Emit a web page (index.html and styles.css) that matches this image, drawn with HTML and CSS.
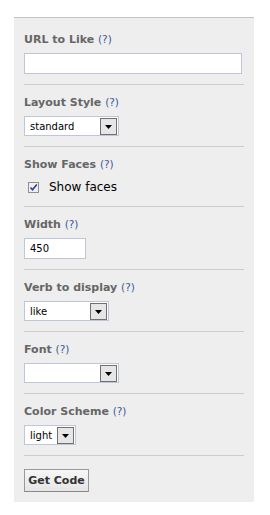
FILE: index.html
```html
<!DOCTYPE html>
<html>
<head>
<meta charset="utf-8">
<link rel="stylesheet" href="styles.css">
</head>
<body>
<div class="panel">
  <div class="section first">
    <div class="label">URL to Like <span class="help">(?)</span></div>
    <div class="textbox wide"></div>
  </div>
  <div class="section">
    <div class="label">Layout Style <span class="help">(?)</span></div>
    <div class="select w95"><span class="val">standard</span><span class="arrow"><svg width="7" height="4" viewBox="0 0 7 4"><path d="M0 0h7L3.5 4z" fill="#000"/></svg></span></div>
  </div>
  <div class="section">
    <div class="label">Show Faces <span class="help">(?)</span></div>
    <label class="check"><span class="box"><svg width="9" height="9" viewBox="0 0 9 9"><path d="M1.5 4.5l2 2.2L7.8 1.5" fill="none" stroke="#2a3f9c" stroke-width="1.6"/></svg></span>Show faces</label>
  </div>
  <div class="section">
    <div class="label">Width <span class="help">(?)</span></div>
    <div class="textbox narrow"><span class="val">450</span></div>
  </div>
  <div class="section">
    <div class="label">Verb to display <span class="help">(?)</span></div>
    <div class="select w85"><span class="val">like</span><span class="arrow"><svg width="7" height="4" viewBox="0 0 7 4"><path d="M0 0h7L3.5 4z" fill="#000"/></svg></span></div>
  </div>
  <div class="section">
    <div class="label">Font <span class="help">(?)</span></div>
    <div class="select w95"><span class="val"></span><span class="arrow"><svg width="7" height="4" viewBox="0 0 7 4"><path d="M0 0h7L3.5 4z" fill="#000"/></svg></span></div>
  </div>
  <div class="section">
    <div class="label">Color Scheme <span class="help">(?)</span></div>
    <div class="select w52"><span class="val">light</span><span class="arrow"><svg width="7" height="4" viewBox="0 0 7 4"><path d="M0 0h7L3.5 4z" fill="#000"/></svg></span></div>
  </div>
  <div class="section last">
    <button class="btn">Get Code</button>
  </div>
</div>
</body>
</html>
```
FILE: styles.css
```css
html, body {
  margin: 0;
  padding: 0;
  background: #fff;
}
body {
  font-family: "DejaVu Sans", sans-serif;
}
.panel {
  margin: 17px 0 0 14px;
  width: 240px;
  border-top: 1px solid #c4c4c4;
  background: #eeeeee;
  padding: 0 10px;
  box-sizing: border-box;
}
.section {
  padding: 10px 0 10px;
  border-bottom: 1px solid #cccccc;
}
.section.first {
  padding-top: 14px;
}
.section.last {
  border-bottom: none;
  padding-top: 13px;
  padding-bottom: 10px;
}
.label {
  font-weight: bold;
  font-size: 11px;
  line-height: 14px;
  height: 14px;
  color: #666666;
  margin-bottom: 7px;
  white-space: nowrap;
}
.help {
  font-weight: normal;
  font-size: 10.5px;
  line-height: 14px;
  color: #3b5998;
}
.textbox {
  height: 21px;
  box-sizing: border-box;
  border: 1px solid #bdc7d8;
  background: #fff;
  display: flex;
  align-items: center;
}
.textbox.wide { width: 218px; }
.textbox.narrow { width: 62px; }
.val {
  font-family: "DejaVu Sans", sans-serif;
  font-size: 10px;
  color: #000;
  padding-left: 5px;
  flex: 1;
}
.select {
  height: 20px;
  box-sizing: border-box;
  border: 1px solid #bdc7d8;
  background: #fff;
  display: flex;
  align-items: center;
  padding-right: 1px;
}
.w95 { width: 95px; }
.w85 { width: 85px; }
.w52 { width: 52px; }
.arrow {
  width: 17px;
  height: 17px;
  box-sizing: border-box;
  border: 1px solid #707070;
  background: #e6e6e6;
  display: flex;
  align-items: center;
  justify-content: center;
  padding-top: 1px;
}
.arrow svg { display: block; }
.check {
  display: flex;
  align-items: center;
  font-size: 12px;
  color: #000;
  padding-left: 4px;
  height: 18px;
  margin-top: 7px;
}
.box {
  width: 11px;
  height: 11px;
  box-sizing: border-box;
  border: 1px solid #8f8f8f;
  background: #eef0f6;
  display: flex;
  align-items: center;
  justify-content: center;
  margin-right: 10px;
}
.btn {
  font-family: "DejaVu Sans", sans-serif;
  font-weight: bold;
  font-size: 11px;
  color: #333;
  height: 23px;
  width: 65px;
  padding: 0;
  border: 1px solid #999;
  border-bottom-color: #888;
  background: linear-gradient(#f7f7f7, #e5e5e5);
  border-radius: 0;
  display: block;
}
```
